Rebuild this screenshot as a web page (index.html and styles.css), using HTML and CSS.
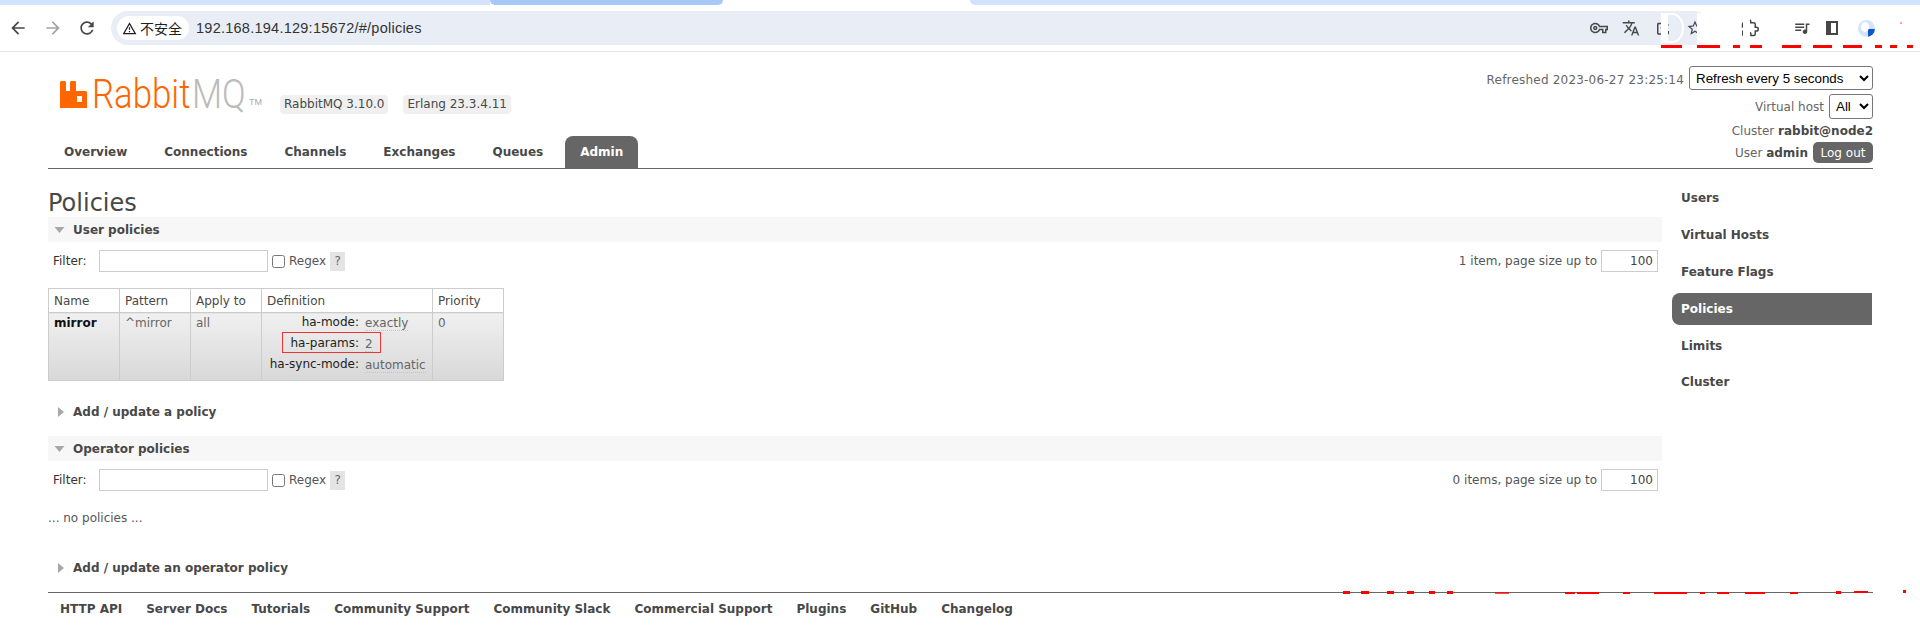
FILE: index.html
```html
<!DOCTYPE html>
<html lang="en">
<head>
<meta charset="utf-8">
<title>RabbitMQ Management</title>
<link rel="stylesheet" href="styles.css">
</head>
<body>
<div class="chrome">
  <div class="tabstrip"><div class="strip-a"></div><div class="strip-tab"></div><div class="strip-white"></div><div class="strip-b"></div></div>
  <div class="toolbar">
    <svg class="nav-ic" viewBox="0 0 24 24"><path d="M20 11H7.83l5.59-5.59L12 4l-8 8 8 8 1.41-1.41L7.83 13H20v-2z"/></svg>
    <svg class="nav-ic dim" viewBox="0 0 24 24"><path d="M12 4l-1.41 1.41L16.17 11H4v2h12.17l-5.58 5.59L12 20l8-8z"/></svg>
    <svg class="nav-ic reload" viewBox="0 0 24 24"><path d="M17.65 6.35C16.2 4.9 14.21 4 12 4c-4.42 0-7.99 3.58-7.99 8s3.57 8 7.99 8c3.73 0 6.84-2.55 7.73-6h-2.08c-.82 2.33-3.04 4-5.65 4-3.31 0-6-2.69-6-6s2.69-6 6-6c1.66 0 3.14.69 4.22 1.78L13 11h7V4l-2.35 2.35z"/></svg>
    <div class="omnibox">
      <div class="chip">
        <svg class="warn" viewBox="0 0 24 24"><path d="M12 5.99L19.53 19H4.47L12 5.99M12 2L1 21h22L12 2zm1 14h-2v2h2v-2zm0-6h-2v4h2v-4z"/></svg>
        <span>不安全</span>
      </div>
      <span class="url">192.168.194.129:15672/#/policies</span>
      <div class="omni-icons">
        <svg class="bar-ic" viewBox="0 0 24 24"><path d="M22 19h-6v-4h-2.68c-1.14 2.42-3.6 4-6.32 4-3.86 0-7-3.14-7-7s3.14-7 7-7c2.72 0 5.17 1.58 6.32 4H24v6h-2v4zm-4-2h2v-4h2v-2H11.94l-.23-.67C11.01 8.34 9.11 7 7 7c-2.76 0-5 2.24-5 5s2.24 5 5 5c2.11 0 4.01-1.34 4.71-3.33l.23-.67H18v4zM7 15c-1.65 0-3-1.35-3-3s1.35-3 3-3 3 1.35 3 3-1.35 3-3 3zm0-4c-.55 0-1 .45-1 1s.45 1 1 1 1-.45 1-1-.45-1-1-1z"/></svg>
        <svg class="bar-ic" viewBox="0 0 24 24"><path d="M12.87 15.07l-2.54-2.51.03-.03c1.74-1.94 2.98-4.17 3.71-6.53H17V4h-7V2H8v2H1v1.99h11.17C11.5 7.92 10.44 9.75 9 11.35 8.07 10.32 7.3 9.19 6.69 8h-2c.73 1.63 1.73 3.17 2.98 4.56l-5.09 5.02L4 19l5-5 3.11 3.11.76-2.04zM18.5 10h-2L12 22h2l1.12-3h4.75L21 22h2l-4.5-12zm-2.62 7l1.62-4.33L19.12 17h-3.24z"/></svg>
        <svg class="bar-ic" viewBox="0 0 24 24"><path d="M18 16v3H6V7h4V5H6c-1.1 0-2 .9-2 2v12c0 1.1.9 2 2 2h12c1.1 0 2-.9 2-2v-3h-2zM20 8l-5-5v3c-4 .5-6 3.5-6.5 7 1.5-2.5 3.5-3.6 6.5-3.6V13l5-5z"/></svg>
        <svg class="bar-ic" viewBox="0 0 24 24"><path d="M22 9.24l-7.19-.62L12 2 9.19 8.63 2 9.24l5.46 4.73L5.82 21 12 17.27 18.18 21l-1.63-7.03L22 9.24zM12 15.4l-3.76 2.27 1-4.28-3.32-2.88 4.38-.38L12 6.1l1.71 4.04 4.38.38-3.32 2.88 1 4.28L12 15.4z"/></svg>
      </div>
    </div>
    <div class="tools">
      <svg class="ext-ic" viewBox="0 0 24 24"><path d="M20.5 11H19V7c0-1.1-.9-2-2-2h-4V3.5C13 2.12 11.88 1 10.5 1S8 2.12 8 3.5V5H4c-1.1 0-1.99.9-1.99 2v3.8H3.5c1.49 0 2.7 1.21 2.7 2.7s-1.21 2.7-2.7 2.7H2V20c0 1.1.9 2 2 2h3.8v-1.5c0-1.49 1.21-2.7 2.7-2.7 1.49 0 2.7 1.21 2.7 2.7V22H17c1.1 0 2-.9 2-2v-4h1.5c1.38 0 2.5-1.12 2.5-2.5S21.88 11 20.5 11z"/></svg>
      <svg class="bar-ic gap-a" viewBox="0 0 24 24"><path d="M15 6H3v2h12V6zm0 4H3v2h12v-2zM3 16h8v-2H3v2zM17 6v8.18c-.31-.11-.65-.18-1-.18-1.66 0-3 1.34-3 3s1.34 3 3 3 3-1.34 3-3V8h3V6h-5z"/></svg>
      <div class="panel-ic"></div>
      <div class="avatar"><div class="avatar-blue"></div></div>
    </div>
  </div>
  <div class="ghost ghost-a"></div>
  <div class="ghost ghost-b"></div>
  <div class="patch patch-a"></div>
  <div class="patch patch-b"></div>
  <div class="patch patch-c"></div>
  <div class="patch patch-d"></div>
  <div class="speck"></div>
</div>

<header class="top">
  <div class="top-left">
    <div class="brand">
      <div class="logo">
        <svg class="logo-mark" viewBox="0 0 27 27"><path fill-rule="evenodd" d="M0 27V1.5C0 .7.7 0 1.5 0h3C5.3 0 6 .7 6 1.5V10h4V1.5C10 .7 10.7 0 11.5 0h3c.8 0 1.5.7 1.5 1.5V10h9.5c.8 0 1.5.7 1.5 1.5V27H0zM17 15v6h5v-6h-5z"/></svg>
        <span class="logo-word logo-rabbit">Rabbit</span><span class="logo-word logo-mq">MQ</span><span class="logo-tm">TM</span>
      </div>
      <span class="badge">RabbitMQ 3.10.0</span>
      <span class="badge">Erlang 23.3.4.11</span>
    </div>
    <nav class="tabs">
      <a class="tab">Overview</a>
      <a class="tab">Connections</a>
      <a class="tab">Channels</a>
      <a class="tab">Exchanges</a>
      <a class="tab">Queues</a>
      <a class="tab tab-on">Admin</a>
    </nav>
  </div>
  <div class="top-right">
    <div class="status-row">
      <span class="refreshed">Refreshed 2023-06-27 23:25:14</span>
      <select class="sel sel-refresh"><option>Refresh every 5 seconds</option></select>
    </div>
    <div class="status-row">
      <span>Virtual host</span>
      <select class="sel sel-vhost"><option>All</option></select>
    </div>
    <div class="status-row cluster"><span>Cluster <b>rabbit@node2</b></span></div>
    <div class="status-row user">
      <span>User <b>admin</b></span>
      <button class="logout">Log out</button>
    </div>
  </div>
</header>

<div class="body-row">
  <main class="content">
    <h1>Policies</h1>

    <div class="section-head">
      <svg class="tri-down" viewBox="0 0 10 6"><path d="M0 0h10L5 6z"/></svg>
      <h2>User policies</h2>
    </div>
    <div class="filter-row">
      <label class="filter-label">Filter:</label>
      <input class="filter-input" type="text">
      <input class="check" type="checkbox">
      <span class="regex">Regex</span>
      <span class="help">?</span>
      <div class="pager">
        <span>1 item, page size up to</span>
        <input class="page-size" type="text" value="100">
      </div>
    </div>

    <table class="list">
      <colgroup><col class="col-n"><col class="col-n"><col class="col-n"><col class="col-d"><col class="col-n"></colgroup>
      <thead>
        <tr><th>Name</th><th>Pattern</th><th>Apply to</th><th>Definition</th><th>Priority</th></tr>
      </thead>
      <tbody>
        <tr>
          <td><b class="pol-name">mirror</b></td>
          <td>^mirror</td>
          <td>all</td>
          <td class="def-cell">
            <div class="facts">
              <span class="fact-key">ha-mode:</span><span class="fact-val"><abbr>exactly</abbr></span>
              <span class="fact-key">ha-params:</span><span class="fact-val"><abbr>2</abbr></span>
              <span class="fact-key">ha-sync-mode:</span><span class="fact-val"><abbr>automatic</abbr></span>
              <div class="redbox"></div>
            </div>
          </td>
          <td>0</td>
        </tr>
      </tbody>
    </table>

    <div class="collapsed first-add">
      <svg class="tri-right" viewBox="0 0 6 10"><path d="M0 0l6 5-6 5z"/></svg>
      <h2>Add / update a policy</h2>
    </div>

    <div class="section-head op-head">
      <svg class="tri-down" viewBox="0 0 10 6"><path d="M0 0h10L5 6z"/></svg>
      <h2>Operator policies</h2>
    </div>
    <div class="filter-row">
      <label class="filter-label">Filter:</label>
      <input class="filter-input" type="text">
      <input class="check" type="checkbox">
      <span class="regex">Regex</span>
      <span class="help">?</span>
      <div class="pager">
        <span>0 items, page size up to</span>
        <input class="page-size" type="text" value="100">
      </div>
    </div>
    <p class="none">... no policies ...</p>

    <div class="collapsed second-add">
      <svg class="tri-right" viewBox="0 0 6 10"><path d="M0 0l6 5-6 5z"/></svg>
      <h2>Add / update an operator policy</h2>
    </div>
  </main>

  <aside class="side">
    <a class="side-item">Users</a>
    <a class="side-item">Virtual Hosts</a>
    <a class="side-item">Feature Flags</a>
    <a class="side-item side-on">Policies</a>
    <a class="side-item">Limits</a>
    <a class="side-item side-last">Cluster</a>
  </aside>
</div>

<footer class="foot">
  <a>HTTP API</a><a>Server Docs</a><a>Tutorials</a><a>Community Support</a><a>Community Slack</a><a>Commercial Support</a><a>Plugins</a><a>GitHub</a><a>Changelog</a>
</footer>

<svg class="scraps" viewBox="0 0 1920 633" width="1920" height="633">
  <g fill="#f00">
    <rect x="1661" y="45" width="21" height="3"/><rect x="1697" y="45" width="23" height="3"/>
    <rect x="1733" y="45" width="7" height="3"/><rect x="1750" y="45" width="12" height="3"/>
    <rect x="1782" y="45" width="19" height="3"/><rect x="1813" y="45" width="19" height="3"/>
    <rect x="1843" y="45" width="19" height="3"/><rect x="1875" y="45" width="7" height="3"/>
    <rect x="1890" y="45" width="7" height="3"/><rect x="1907" y="45" width="6" height="3"/>
    <rect x="1343" y="591" width="7" height="3"/><rect x="1361" y="591" width="8" height="3"/>
    <rect x="1387" y="591" width="7" height="3"/><rect x="1407" y="591" width="7" height="3"/>
    <rect x="1429" y="591" width="6" height="3"/><rect x="1447" y="591" width="6" height="3"/>
    <rect x="1495" y="592" width="14" height="2" opacity=".7"/><rect x="1565" y="592" width="10" height="2"/>
    <rect x="1577" y="592" width="22" height="2"/><rect x="1623" y="592" width="7" height="2"/>
    <rect x="1654" y="592" width="33" height="2"/><rect x="1700" y="592" width="5" height="2"/>
    <rect x="1717" y="592" width="12" height="2"/><rect x="1745" y="592" width="20" height="2"/>
    <rect x="1790" y="592" width="8" height="2"/><rect x="1836" y="591" width="5" height="3"/>
    <rect x="1854" y="591" width="14" height="2"/><rect x="1903" y="590" width="3" height="3"/>
  </g>
</svg>
</body>
</html>
```
FILE: styles.css
```css
* { box-sizing: border-box; }
html, body { margin: 0; padding: 0; height: 633px; overflow: hidden; background: #fff; }
body { position: relative; font: 12px "DejaVu Sans", Verdana, sans-serif; color: #484848; }
a { display: block; }

/* browser chrome */
.chrome { height: 52px; border-bottom: 1px solid #e3e3e3; position: relative; }
.tabstrip { display: flex; height: 5px; }
.strip-a { width: 490px; background: #d3e3fd; }
.strip-tab { width: 233px; background: #a8c7fa; border-radius: 0 0 5px 5px; }
.strip-white { width: 247px; background: #fff; }
.strip-b { flex: 1; background: #d3e3fd; border-radius: 0 0 0 5px; }
.toolbar { display: flex; align-items: center; height: 46px; padding-left: 8px; }
.nav-ic { width: 20px; height: 20px; fill: #474747; margin-right: 15px; flex: none; }
.nav-ic.dim { fill: #a3a3a3; }
.nav-ic.reload { margin-left: -1px; }
.omnibox { display: flex; align-items: center; width: 1600px; height: 34px; background: #e9eef6; border-radius: 17px; margin-left: -1px; padding-left: 6px; flex: none; }
.chip { display: flex; align-items: center; height: 24px; width: 72px; background: #fff; border-radius: 12px; padding-left: 5px; font: 14px "Noto Sans CJK SC", sans-serif; color: #1f1f1f; }
.warn { width: 15px; height: 15px; fill: #1f1f1f; margin-right: 3px; }
.url { font: 14.5px "Liberation Sans", sans-serif; color: #333; margin-left: 7px; letter-spacing: .25px; }
.omni-icons { margin-left: auto; display: flex; gap: 14px; align-items: center; padding-right: 7px; }
.bar-ic { width: 18px; height: 18px; fill: #474747; flex: none; }
.ext-ic { width: 18px; height: 18px; fill: none; stroke: #474747; stroke-width: 2; flex: none; }
.tools { display: flex; align-items: center; margin-left: 30px; }
.gap-a { margin-left: 34px; }
.panel-ic { width: 12px; height: 14px; border: 2px solid #474747; border-left-width: 5px; margin-left: 15px; }
.avatar { width: 17px; height: 17px; border-radius: 50%; background: #d3e3fd; margin-left: 20px; position: relative; overflow: hidden; }
.avatar-blue { position: absolute; right: 0; bottom: 0; width: 7px; height: 8px; background: #0b57d0; }
.ghost { position: absolute; top: 13px; width: 23px; height: 30px; border: solid #fff; border-width: 2px 2px 2px 7px; border-radius: 0 50% 50% 0; }
.ghost-a { left: 1661px; }
.ghost-b { left: 1697px; border-left-width: 11px; }
.patch { position: absolute; background: #fff; }
.patch-a { left: 1708px; top: 13px; width: 14px; height: 32px; }
.patch-b { left: 1743px; top: 16px; width: 7px; height: 28px; }
.patch-c { left: 1733px; top: 30px; width: 9px; height: 14px; }
.patch-d { left: 1861px; top: 22px; width: 8px; height: 10px; border-radius: 50%; }
.speck { position: absolute; left: 1900px; top: 22px; width: 2px; height: 2px; background: #f7a0a0; }

/* header */
.top { display: flex; justify-content: space-between; height: 117px; margin: 0 47px 0 48px; border-bottom: 1px solid #666; }
.top-left { display: flex; flex-direction: column; justify-content: space-between; padding-top: 28px; }
.brand { display: flex; align-items: flex-end; }
.logo { display: flex; align-items: flex-end; height: 28px; margin-left: 12px; width: 220px; }
.logo-mark { width: 27px; height: 27px; fill: #f60; flex: none; margin-right: 5px; }
.logo-word { display: block; font: 300 40px/28px Roboto, sans-serif; white-space: nowrap; transform: scaleX(.87); transform-origin: left center; position: relative; top: 1px; }
.logo-rabbit { color: #f60; width: 100px; }
.logo-mq { color: #bbb; width: 57px; }
.logo-tm { font: 9px "Liberation Sans", sans-serif; color: #aaa; line-height: 10px; padding-bottom: 1px; }
.badge { background: #f0f0f0; border-radius: 4px; padding: 3px 4px; line-height: 13px; margin-right: 15px; margin-bottom: -6px; height: 19px; }
.tabs { display: flex; gap: 7px; margin-left: 1px; }
.tab { height: 32px; line-height: 32px; padding: 0 15px; font-weight: bold; color: #484848; border-radius: 8px 8px 0 0; }
.tab-on { background: #666; color: #fff; }
.top-right { display: flex; flex-direction: column; align-items: flex-end; padding-top: 14px; color: #666; }
.status-row { display: flex; align-items: center; gap: 5px; }
.status-row b { color: #484848; }
.refreshed { letter-spacing: .2px; }
.sel { font: 13.33px "Liberation Sans", sans-serif; color: #000; background: #fff; border: 1px solid #767676; border-radius: 3px; padding: 0 2px; }
.sel-refresh { width: 184px; height: 24px; margin-bottom: 4px; }
.sel-vhost { width: 44px; height: 25px; }
.cluster { height: 23px; }
.logout { width: 60px; height: 21px; background: #666; color: #fff; border: 0; border-radius: 5px; font: 12px "DejaVu Sans", sans-serif; padding: 0; }

/* main */
.body-row { display: flex; margin-left: 48px; gap: 10px; }
.content { width: 1614px; }
h1 { margin: 20px 0 0; font: normal 24px/28px "DejaVu Sans", sans-serif; color: #484848; }
h2 { margin: 0; font: bold 12px/14px "DejaVu Sans", sans-serif; color: #484848; }
.section-head { display: flex; align-items: center; height: 25px; background: #f7f7f7; padding-left: 6px; }
.tri-down { width: 11px; height: 6px; fill: #a8a8a8; margin-right: 8px; }
.tri-right { width: 6px; height: 10px; fill: #a8a8a8; margin-right: 9px; }
.collapsed { display: flex; align-items: center; height: 25px; padding-left: 10px; }
.first-add { margin-top: 18px; }
.op-head { margin-top: 12px; }
.second-add { margin-top: 30px; }
.filter-row { display: flex; align-items: center; height: 22px; margin-top: 8px; padding: 0 4px 0 5px; }
.filter-label { color: #333; width: 46px; }
.filter-input { width: 169px; height: 22px; border: 1px solid #ccc; padding: 0 3px; background: #fff; }
.check { width: 13px; height: 13px; margin: 0 4px 0 4px; }
.regex { color: #555; }
.help { width: 15px; height: 19px; background: #e4e4e4; margin-left: 4px; text-align: center; line-height: 19px; color: #666; }
.pager { margin-left: auto; display: flex; align-items: center; gap: 4px; color: #555; }
.page-size { width: 57px; height: 22px; border: 1px solid #ccc; text-align: right; padding: 0 4px; font: 12px "DejaVu Sans", sans-serif; color: #444; }

.list { border-collapse: collapse; table-layout: fixed; width: 455px; margin-top: 16px; }
.col-n { width: 71px; }
.col-d { width: 171px; }
.list th, .list td { border: 1px solid #ccc; text-align: left; padding: 0 5px; font-weight: normal; }
.list th { height: 24px; background: #fff; color: #484848; }
.list td { height: 68px; vertical-align: top; padding-top: 3px; line-height: 15px; color: #666; background: linear-gradient(#f0f0f0, #d8d8d8); }
.pol-name { color: #111; }
.list td.def-cell { padding: 1px 0 0; }
.facts { position: relative; display: grid; grid-template-columns: 97px 1fr; column-gap: 6px; grid-auto-rows: 21px; }
.fact-key { text-align: right; color: #222; line-height: 16px; }
.fact-val { color: #666; line-height: 18px; }
.fact-val abbr { border-bottom: 1px dotted #c4c4c4; text-decoration: none; }
.redbox { position: absolute; left: 20px; top: 18px; width: 99px; height: 21px; border: 1px solid #e33; }
.none { margin: 20px 0 0; line-height: 14px; color: #555; }

.side { width: 200px; padding-top: 13px; display: flex; flex-direction: column; gap: 5px; }
.side-item { height: 32px; line-height: 32px; padding-left: 9px; font-weight: bold; color: #484848; border-radius: 8px 0 0 8px; }
.side-on { background: #666; color: #fff; }
.side-last { margin-top: -1px; }

.foot { display: flex; gap: 24px; position: absolute; left: 48px; right: 47px; top: 592px; height: 32px; border-top: 1px solid #666; padding: 9px 0 0 12px; font-weight: bold; line-height: 15px; }
.scraps { position: absolute; left: 0; top: 0; pointer-events: none; }
```
